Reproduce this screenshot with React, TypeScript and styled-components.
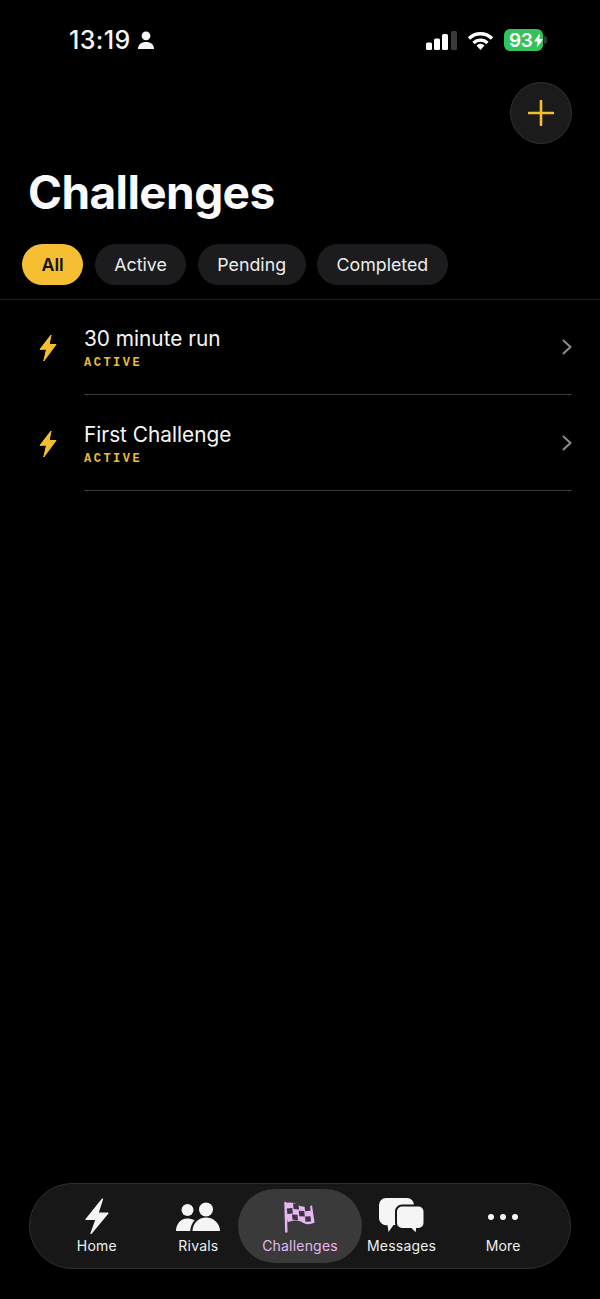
import React from 'react';
import styled, { createGlobalStyle } from 'styled-components';

const GlobalStyle = createGlobalStyle`
  html, body {
    margin: 0;
    padding: 0;
    background: #000;
  }
  body {
    font-family: Inter, 'Liberation Sans', sans-serif;
  }
`;

const Screen = styled.div`
  width: 600px;
  height: 1299px;
  background: #000;
  color: #fff;
  display: flex;
  flex-direction: column;
  overflow: hidden;
`;

const StatusBar = styled.div`
  height: 82px;
  box-sizing: border-box;
  padding: 25px 57px 0 69px;
  display: flex;
  justify-content: space-between;
  align-items: flex-start;
`;

const StatusLeft = styled.div`
  display: flex;
  align-items: center;
  gap: 7px;
`;

const Clock = styled.span`
  font-size: 25px;
  line-height: 30px;
  font-weight: 500;
  letter-spacing: 0.4px;
  color: #f5f5f5;
`;

const StatusRight = styled.div`
  display: flex;
  align-items: center;
  height: 30px;
  gap: 10px;
`;

const Battery = styled.div`
  width: 39px;
  height: 22px;
  box-sizing: border-box;
  padding-left: 5px;
  border-radius: 6px;
  background: #34c25c;
  color: #fff;
  font-size: 19px;
  font-weight: 600;
  display: flex;
  align-items: center;
  gap: 1px;
  position: relative;
  letter-spacing: -0.3px;
  &:after {
    content: '';
    position: absolute;
    right: -4px;
    top: 7px;
    width: 3px;
    height: 8px;
    border-radius: 0 3px 3px 0;
    background: #3a3a3a;
  }
`;

const ActionRow = styled.div`
  display: flex;
  justify-content: flex-end;
  padding-right: 28px;
`;

const AddButton = styled.div`
  width: 62px;
  height: 62px;
  box-sizing: border-box;
  border-radius: 50%;
  background: #1b1b1c;
  border: 1px solid #303031;
  display: flex;
  align-items: center;
  justify-content: center;
`;

const Title = styled.h1`
  margin: 20px 0 0 28px;
  font-size: 46px;
  line-height: 56px;
  font-weight: 700;
  letter-spacing: -0.6px;
  color: #fafafa;
`;

const Filters = styled.div`
  display: flex;
  gap: 11.5px;
  margin: 24px 0 0 22px;
`;

const Chip = styled.div<{ $active?: boolean }>`
  height: 41px;
  box-sizing: border-box;
  padding: 0 19.5px;
  border-radius: 21px;
  display: flex;
  align-items: center;
  font-size: 17.8px;
  font-weight: ${(p) => (p.$active ? 600 : 400)};
  background: ${(p) => (p.$active ? '#f6bf33' : '#1c1c1e')};
  color: ${(p) => (p.$active ? '#111' : '#ececec')};
`;

const Divider = styled.div`
  height: 1px;
  margin-top: 14px;
  background: #1d1d1e;
`;

const List = styled.div`
  display: flex;
  flex-direction: column;
  flex: 1;
  margin-top: -1px;
`;

const Row = styled.div`
  height: 96px;
  display: flex;
`;

const RowIcon = styled.div`
  width: 84px;
  box-sizing: border-box;
  padding: 35px 0 0 39px;
  flex-shrink: 0;
`;

const RowBody = styled.div`
  flex: 1;
  margin-right: 28px;
  display: flex;
  border-bottom: 1px solid #3a3a3b;
  box-sizing: border-box;
`;

const RowText = styled.div`
  flex: 1;
  padding-top: 26px;
`;

const RowTitle = styled.div`
  font-size: 20.8px;
  line-height: 28px;
  font-weight: 400;
  color: #f6f6f6;
`;

const RowStatus = styled.div`
  font-family: 'Liberation Mono', monospace;
  font-size: 12px;
  line-height: 14px;
  font-weight: 700;
  letter-spacing: 2.5px;
  color: #eebb35;
  margin-top: 3px;
`;

const Chevron = styled.div`
  padding-top: 40px;
`;

const TabBar = styled.div`
  height: 86px;
  margin: 0 29px 30px 29px;
  box-sizing: border-box;
  border-radius: 43px;
  border: 1px solid #2f2f30;
  background: #171718;
  display: grid;
  grid-template-columns: repeat(5, 1fr);
  align-items: center;
  padding: 0 16px;
`;

const Tab = styled.div<{ $active?: boolean }>`
  height: 74px;
  border-radius: 37px;
  display: flex;
  flex-direction: column;
  align-items: center;
  justify-content: flex-end;
  padding-bottom: 8px;
  box-sizing: border-box;
  gap: 1px;
  font-size: 14px;
  line-height: 18px;
  font-weight: 400;
  letter-spacing: 0.2px;
  background: ${(p) => (p.$active ? '#3a3a3b' : 'transparent')};
  color: ${(p) => (p.$active ? '#e6b8f2' : '#efefef')};
  ${(p) => (p.$active ? 'margin: 0 -11px;' : '')}
`;

const TabIcon = styled.div`
  height: 38px;
  display: flex;
  justify-content: center;
`;

const PersonIcon = () => (
  <svg width="16" height="18" viewBox="0 0 16 18" fill="#f5f5f5">
    <circle cx="8" cy="4.800" r="4.400" />
    <path d="M0 18c0-4.700 3.400-7 8-7s8 2.300 8 7z" />
  </svg>
);

const SignalIcon = () => (
  <svg width="31" height="19" viewBox="0 0 31 19">
    <rect x="0" y="11.500" width="6" height="7.500" rx="1.500" fill="#fff" />
    <rect x="8" y="7.500" width="6" height="11.500" rx="1.500" fill="#fff" />
    <rect x="16" y="3" width="6" height="16" rx="1.500" fill="#fff" />
    <rect x="25" y="0" width="6" height="19" rx="1.500" fill="#3a3a3a" />
  </svg>
);

const WifiIcon = () => (
  <svg width="27" height="19" viewBox="0 0 27 19" fill="none" stroke="#fff" strokeWidth="3.400">
    <path d="M2 7.500a16.300 16.300 0 0 1 23 0" />
    <path d="M6.500 12a10 10 0 0 1 14 0" />
    <path d="M13.500 19l-4-4.500a5.600 5.600 0 0 1 8 0z" fill="#fff" stroke="none" />
  </svg>
);

const BoltSmall = () => (
  <svg width="10" height="15" viewBox="0 0 10 15" fill="#fff">
    <path d="M6 0L0 8.500h4L3 15l7-9H6z" />
  </svg>
);

const PlusIcon = () => (
  <svg width="26" height="26" viewBox="0 0 26 26" stroke="#f6bf33" strokeWidth="2.600" strokeLinecap="round">
    <path d="M13 1v24M1 13h24" />
  </svg>
);

const RowBolt = () => (
  <svg width="18" height="28" viewBox="0 0 18 28" fill="#f6bf33" stroke="#f6bf33" strokeWidth="1" strokeLinejoin="round">
    <path d="M12 1L1 15.300h6.500L4.800 27 17 10.500h-6.800z" />
  </svg>
);

const ChevronIcon = () => (
  <svg width="10" height="16" viewBox="0 0 10 16" fill="none" stroke="#8b8b8d" strokeWidth="2" strokeLinecap="round" strokeLinejoin="round">
    <path d="M1.500 1.500L8.500 8l-7 6.500" />
  </svg>
);

const HomeIcon = () => (
  <svg width="24" height="38" viewBox="0 0 24 38" fill="#f5f5f5" stroke="#f5f5f5" strokeWidth="1.200" strokeLinejoin="round">
    <path d="M17.500 1L1 21.500h10L6 35.500 23 15.200H13z" />
  </svg>
);

const RivalsIcon = () => (
  <svg width="44" height="38" viewBox="0 0 44 38" fill="#f5f5f5">
    <circle cx="11.500" cy="12" r="6" />
    <circle cx="30" cy="11.500" r="7" />
    <path d="M0 33c0-6.500 4.500-12.500 11-12.500 2.800 0 5.300.6 7.500 1.700-2.300 2.600-4 6.500-4.300 10.800z" />
    <path d="M16.500 33c0-7.500 6-13.500 13.500-13.500S44 25.500 44 33z" />
  </svg>
);

const FlagIcon = () => (
  <svg width="31" height="38" viewBox="0 0 31 38">
    <path d="M1.500 5l.8 28.500" stroke="#e6b8f2" strokeWidth="2.400" strokeLinecap="round" />
    <path
      d="M1 5c5-1.200 10-.8 15 3 4 1.300 8 .8 12-.5l2.600 17c-3 1.400-6 2-8.500 1.500-3-.8-5-3-8-3.300-3.500-.3-7 .3-10.500 1.500z"
      fill="#e6b8f2"
    />
    <path d="M9 5.500l5.500.5.600 5.500-5.500-.5z" fill="#3e3340" />
    <path d="M20.500 7.700l5.500-.5.600 5.500-5.500.5z" fill="#3e3340" />
    <path d="M2.800 10.500l5.500-.5.600 5.500-5.500.5z" fill="#3e3340" />
    <path d="M14.800 12.800l5.500.3.500 5.500-5.500-.3z" fill="#3e3340" />
    <path d="M8 16.500l5.500.2.500 5.300-5.500-.2z" fill="#3e3340" />
    <path d="M21 18.500l5.500-.2.500 5.200-5.500.2z" fill="#3e3340" />
  </svg>
);

const MessagesIcon = () => (
  <svg width="46" height="38" viewBox="0 0 46 38">
    <path
      d="M7 0h21a7 7 0 0 1 7 7v13a7 7 0 0 1-7 7H14.500L9.500 34l-1-7A7 7 0 0 1 0 20V7a7 7 0 0 1 7-7z"
      fill="#f5f5f5"
    />
    <path
      d="M23 7.500h16.500a6 6 0 0 1 6 6V25a6 6 0 0 1-6 6h-1.500l-.5 5.500-5.500-5.500H23a6 6 0 0 1-6-6V13.500a6 6 0 0 1 6-6z"
      fill="#f5f5f5"
      stroke="#171718"
      strokeWidth="2"
    />
  </svg>
);

const MoreIcon = () => (
  <svg width="30" height="38" viewBox="0 0 30 38" fill="#f5f5f5">
    <circle cx="3" cy="19" r="3" />
    <circle cx="15" cy="19" r="3" />
    <circle cx="27" cy="19" r="3" />
  </svg>
);

const filters = ['All', 'Active', 'Pending', 'Completed'];
const challenges = ['30 minute run', 'First Challenge'];

const tabs = [
  { label: 'Home', icon: <HomeIcon /> },
  { label: 'Rivals', icon: <RivalsIcon /> },
  { label: 'Challenges', icon: <FlagIcon />, active: true },
  { label: 'Messages', icon: <MessagesIcon /> },
  { label: 'More', icon: <MoreIcon /> },
];

const App = () => (
  <>
    <GlobalStyle />
    <Screen>
      <StatusBar>
        <StatusLeft>
          <Clock>13:19</Clock>
          <PersonIcon />
        </StatusLeft>
        <StatusRight>
          <SignalIcon />
          <WifiIcon />
          <Battery>
            93
            <BoltSmall />
          </Battery>
        </StatusRight>
      </StatusBar>
      <ActionRow>
        <AddButton>
          <PlusIcon />
        </AddButton>
      </ActionRow>
      <Title>Challenges</Title>
      <Filters>
        {filters.map((f, i) => (
          <Chip key={f} $active={i === 0}>
            {f}
          </Chip>
        ))}
      </Filters>
      <Divider />
      <List>
        {challenges.map((name) => (
          <Row key={name}>
            <RowIcon>
              <RowBolt />
            </RowIcon>
            <RowBody>
              <RowText>
                <RowTitle>{name}</RowTitle>
                <RowStatus>ACTIVE</RowStatus>
              </RowText>
              <Chevron>
                <ChevronIcon />
              </Chevron>
            </RowBody>
          </Row>
        ))}
      </List>
      <TabBar>
        {tabs.map((t) => (
          <Tab key={t.label} $active={t.active}>
            <TabIcon>{t.icon}</TabIcon>
            {t.label}
          </Tab>
        ))}
      </TabBar>
    </Screen>
  </>
);

export default App;
